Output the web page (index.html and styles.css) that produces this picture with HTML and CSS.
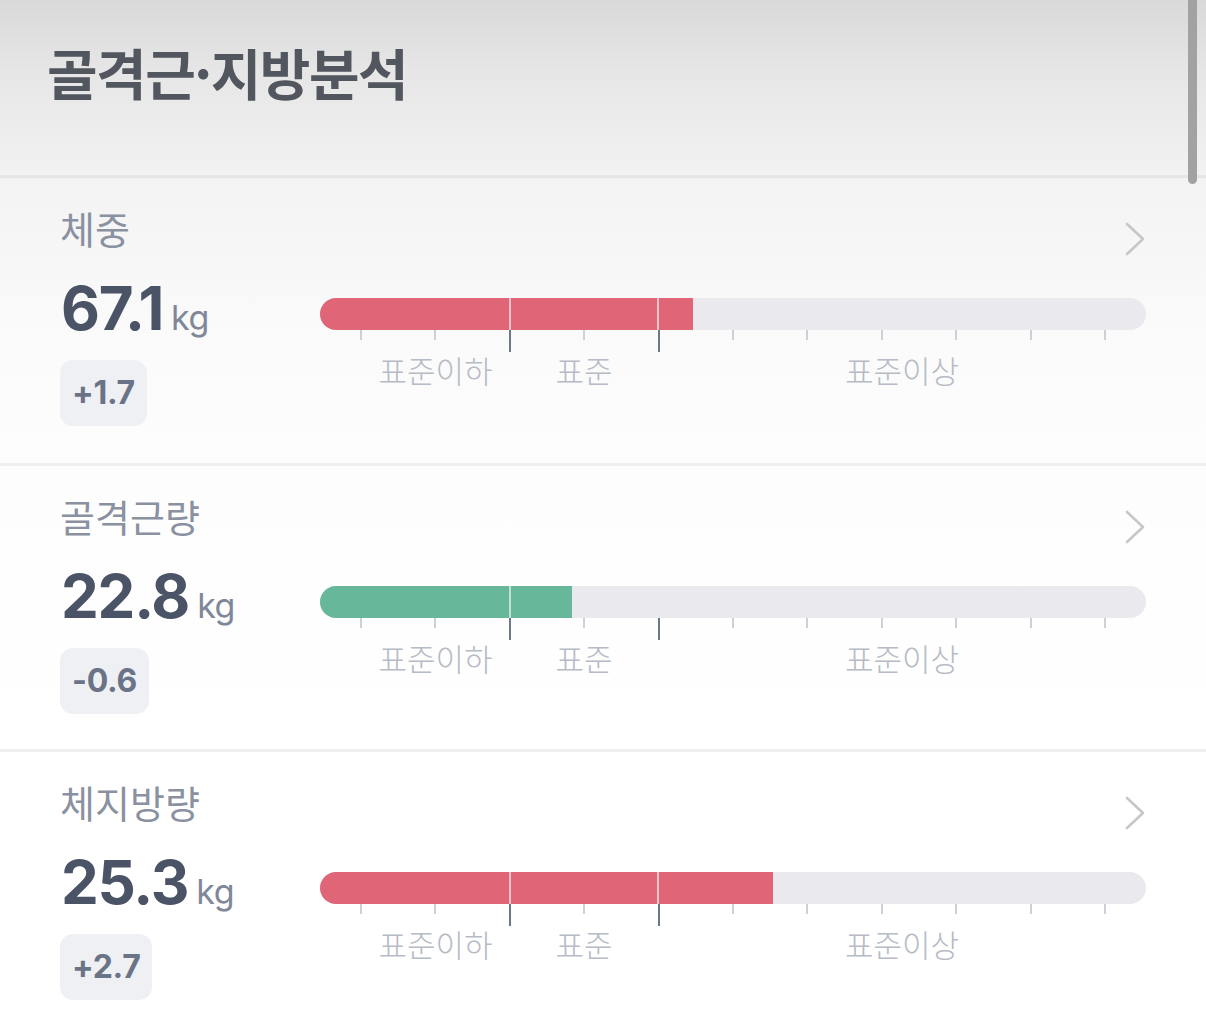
FILE: index.html
```html
<!DOCTYPE html>
<html lang="ko">
<head>
<meta charset="utf-8">
<title>골격근·지방분석</title>
<link rel="stylesheet" href="styles.css">
</head>
<body>
<div class="page">
  <header class="header">
    <h1 class="title">골격근·지방분석</h1>
  </header>

  <section class="row row-1">
    <div class="left">
      <div class="label">체중</div>
      <div class="value"><span class="num">67.1</span><span class="unit">kg</span></div>
      <div class="badge">+1.7</div>
    </div>
    <div class="right">
      <div class="chev-wrap"><svg class="chev" viewBox="0 0 22 34" width="22" height="34"><polyline points="3,2 19,17 3,32" fill="none" stroke="#c7c7ca" stroke-width="2.6" stroke-linecap="round" stroke-linejoin="round"/></svg></div>
      <div class="bar"><div class="fill red" style="width:373px"><i class="seg seg-a"></i><i class="seg seg-b"></i></div></div>
      <div class="ticks"><i class="tick"></i><i class="tick"></i><i class="tick dark"></i><i class="tick"></i><i class="tick dark"></i><i class="tick"></i><i class="tick"></i><i class="tick"></i><i class="tick"></i><i class="tick"></i><i class="tick"></i></div>
      <div class="scale"><span></span><span>표준이하</span><span>표준</span><span>표준이상</span></div>
    </div>
  </section>

  <section class="row row-2">
    <div class="left">
      <div class="label">골격근량</div>
      <div class="value"><span class="num">22.8</span><span class="unit">kg</span></div>
      <div class="badge">-0.6</div>
    </div>
    <div class="right">
      <div class="chev-wrap"><svg class="chev" viewBox="0 0 22 34" width="22" height="34"><polyline points="3,2 19,17 3,32" fill="none" stroke="#c7c7ca" stroke-width="2.6" stroke-linecap="round" stroke-linejoin="round"/></svg></div>
      <div class="bar"><div class="fill green" style="width:252px"><i class="seg seg-a"></i><i class="seg seg-b"></i></div></div>
      <div class="ticks"><i class="tick"></i><i class="tick"></i><i class="tick dark"></i><i class="tick"></i><i class="tick dark"></i><i class="tick"></i><i class="tick"></i><i class="tick"></i><i class="tick"></i><i class="tick"></i><i class="tick"></i></div>
      <div class="scale"><span></span><span>표준이하</span><span>표준</span><span>표준이상</span></div>
    </div>
  </section>

  <section class="row row-3">
    <div class="left">
      <div class="label">체지방량</div>
      <div class="value"><span class="num">25.3</span><span class="unit">kg</span></div>
      <div class="badge">+2.7</div>
    </div>
    <div class="right">
      <div class="chev-wrap"><svg class="chev" viewBox="0 0 22 34" width="22" height="34"><polyline points="3,2 19,17 3,32" fill="none" stroke="#c7c7ca" stroke-width="2.6" stroke-linecap="round" stroke-linejoin="round"/></svg></div>
      <div class="bar"><div class="fill red" style="width:453px"><i class="seg seg-a"></i><i class="seg seg-b"></i></div></div>
      <div class="ticks"><i class="tick"></i><i class="tick"></i><i class="tick dark"></i><i class="tick"></i><i class="tick dark"></i><i class="tick"></i><i class="tick"></i><i class="tick"></i><i class="tick"></i><i class="tick"></i><i class="tick"></i></div>
      <div class="scale"><span></span><span>표준이하</span><span>표준</span><span>표준이상</span></div>
    </div>
  </section>

  <div class="scrollbar"></div>
</div>
</body>
</html>
```

FILE: styles.css
```css
* { box-sizing: border-box; }

html, body {
  margin: 0;
  padding: 0;
  background: #ffffff;
}

body {
  font-family: Inter, "Noto Sans CJK KR", sans-serif;
  width: 1206px;
  height: 1024px;
  overflow: hidden;
}

.page {
  position: relative;
  width: 1206px;
  height: 1024px;
  overflow: hidden;
  background: #ffffff;
}

.header {
  height: 178px;
  padding: 35px 0 0 47px;
  background: linear-gradient(180deg, #d9d9d9 0%, #e6e6e6 40%, #f2f2f2 100%);
  border-bottom: 3px solid #e6e6e8;
}

.title {
  margin: 0;
  font-family: "Noto Sans CJK KR", sans-serif;
  font-weight: 700;
  font-size: 55px;
  line-height: 72px;
  letter-spacing: -1.5px;
  color: #52565e;
}

.row {
  display: grid;
  grid-template-columns: 260px 826px;
  padding: 0 60px;
  height: 288px;
  border-bottom: 3px solid #efeff1;
}

.row-1 { background: linear-gradient(180deg, #f3f3f3 0%, #fafafa 50%, #fdfdfd 100%); }
.row-2 { background: linear-gradient(180deg, #fdfdfd 0%, #ffffff 100%); height: 286px; }
.row-3 { background: #ffffff; border-bottom: none; }

.left {
  display: flex;
  flex-direction: column;
  align-items: flex-start;
}

.label {
  margin-top: 25px;
  font-family: "Noto Sans CJK KR", sans-serif;
  font-size: 38px;
  line-height: 50px;
  color: #8a91a1;
  letter-spacing: 0;
}

.value {
  margin-top: 22px;
  display: flex;
  align-items: baseline;
  height: 66px;
  line-height: 66px;
}

.num {
  font-family: Inter, sans-serif;
  font-weight: 700;
  font-size: 60px;
  letter-spacing: -1.2px;
  color: #4b5367;
  margin-left: 1px;
}

.unit {
  font-family: Inter, sans-serif;
  font-weight: 400;
  font-size: 34px;
  color: #7f8799;
  margin-left: 8px;
  letter-spacing: -0.5px;
}

.badge {
  margin-top: 19px;
  height: 66px;
  padding: 0 12px;
  border-radius: 13px;
  background: #eef0f4;
  font-family: Inter, sans-serif;
  font-weight: 700;
  font-size: 32px;
  line-height: 66px;
  letter-spacing: -0.3px;
  color: #6b7387;
}

.right {
  display: flex;
  flex-direction: column;
}

.chev-wrap {
  display: flex;
  justify-content: flex-end;
  margin-top: 44px;
  height: 34px;
}

.chev { display: block; }

.bar {
  margin-top: 42px;
  height: 32px;
  border-radius: 16px;
  background: #e9e9ee;
  overflow: hidden;
}

.fill {
  position: relative;
  height: 100%;
  overflow: hidden;
}

.fill.red { background: #e06577; }
.fill.green { background: #67b79a; }

.seg {
  position: absolute;
  top: 0;
  bottom: 0;
  width: 2px;
  background: rgba(255, 255, 255, 0.6);
}

.seg-a { left: 189px; }
.seg-b { left: 337px; }

.ticks {
  display: flex;
  justify-content: space-between;
  align-items: flex-start;
  padding: 0 40px;
  height: 22px;
}

.tick {
  display: block;
  width: 2px;
  height: 10px;
  background: #cdd0d7;
}

.tick.dark {
  height: 22px;
  background: #6e768a;
}

.scale {
  display: grid;
  grid-template-columns: 41px 149px 148px 1fr;
  margin-top: -3px;
  font-family: "Noto Sans CJK KR", sans-serif;
  font-size: 31px;
  line-height: 42px;
  font-weight: 300;
  color: #b6bbc5;
  text-align: center;
  letter-spacing: 0;
}

.scrollbar {
  position: absolute;
  top: -8px;
  right: 9px;
  width: 9px;
  height: 192px;
  border-radius: 5px;
  background: #a2a2a2;
}
```
